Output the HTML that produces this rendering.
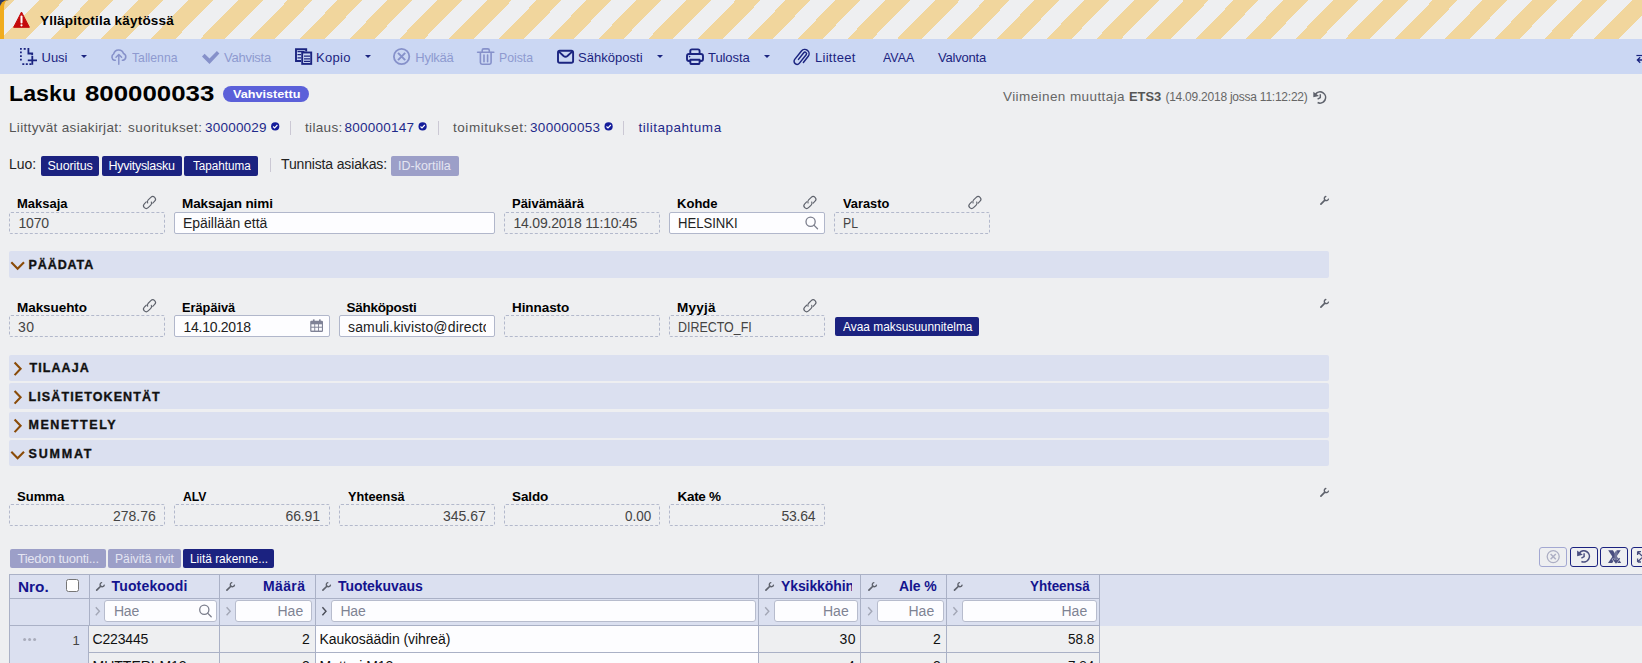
<!DOCTYPE html>
<html lang="fi">
<head>
<meta charset="utf-8">
<title>Lasku 800000033</title>
<style>
*{box-sizing:border-box;margin:0;padding:0}
html,body{width:1642px;height:663px;overflow:hidden;background:#eeeff1;font-family:"Liberation Sans","DejaVu Sans",sans-serif;color:#000}
body{position:relative}
.a{position:absolute;white-space:nowrap;line-height:1}
svg{position:absolute;overflow:visible}
#banner{left:0;top:0;width:1642px;height:39px;border-top-left-radius:9px;background:repeating-linear-gradient(134.29deg,#f1d69d 0,#f1d69d 10.09px,#eeeff1 10.09px,#eeeff1 27.91px,#f1d69d 27.91px,#f1d69d 35.635px)}
#corner{left:0;top:0;width:10px;height:10px;background:#2b3a67}
#bannerL{left:0;top:0;width:8px;height:39px;border-left:4px solid #f0ac1e;border-top-left-radius:9px}
#tb{left:0;top:39px;width:1642px;height:35px;background:#cbd7f3}
.car{top:55px;width:0;height:0;border-left:3px solid transparent;border-right:3px solid transparent;border-top:3px solid #1b2480}
#badge{left:223px;top:86.4px;width:86px;height:15.6px;border-radius:8px;background:#5b60d9}
.sep{width:1.4px;background:#cbc8d4}
.btn{border-radius:2px;background:#1b2280}
.btn.dis{background:#9c9fc8}
.inp{height:22px;border:1px dashed #b3b9cc;border-radius:2px}
.inp.w{border:1px solid #b1b7cb;background:#fdfdff}
.bar{left:9px;width:1320px;height:26px;background:#dbe0f0;border-radius:2px}
.hl{background:#aab1c6}
.fi{height:22px;background:#fdfdff;border:1px solid #b7bccd;border-radius:3px}
.ib{height:20px;border:1.5px solid #1b2280;border-radius:3px}
</style>
</head>
<body>
<div class="a" id="corner"></div>
<div class="a" id="banner"></div>
<div class="a" id="bannerL"></div>
<div class="a" id="tb"></div>
<div class="a car" style="left:81px"></div>
<div class="a car" style="left:365px"></div>
<div class="a car" style="left:657px"></div>
<div class="a car" style="left:764px"></div>
<div class="a" id="badge"></div>
<div class="a sep" style="left:289.8px;top:120.5px;height:14px"></div>
<div class="a sep" style="left:437.8px;top:120.5px;height:14px"></div>
<div class="a sep" style="left:622.8px;top:120.5px;height:14px"></div>
<div class="a sep" style="left:269.8px;top:157.5px;height:14px"></div>
<div class="a btn" style="left:41px;top:156px;width:58px;height:20px"></div>
<div class="a btn" style="left:102px;top:156px;width:80px;height:20px"></div>
<div class="a btn" style="left:184px;top:156px;width:74px;height:20px"></div>
<div class="a btn dis" style="left:391px;top:156px;width:68px;height:20px"></div>
<!-- row1 inputs -->
<div class="a inp" style="left:9px;top:212px;width:156px"></div>
<div class="a inp w" style="left:174px;top:212px;width:321px"></div>
<div class="a inp" style="left:504px;top:212px;width:156px"></div>
<div class="a inp w" style="left:669px;top:212px;width:156px"></div>
<div class="a inp" style="left:834px;top:212px;width:156px"></div>
<div class="a bar" style="top:251px;height:27px"></div>
<!-- row2 inputs -->
<div class="a inp" style="left:9px;top:315px;width:156px"></div>
<div class="a inp w" style="left:174px;top:315px;width:156px"></div>
<div class="a inp w" style="left:339px;top:315px;width:156px"></div>
<div class="a inp" style="left:504px;top:315px;width:156px"></div>
<div class="a inp" style="left:669px;top:315px;width:156px"></div>
<div class="a btn" style="left:835px;top:317px;width:144px;height:19px"></div>
<div class="a bar" style="top:355px"></div>
<div class="a bar" style="top:383px"></div>
<div class="a bar" style="top:412px"></div>
<div class="a bar" style="top:440px"></div>
<!-- row3 inputs -->
<div class="a inp" style="left:9px;top:504px;width:156px"></div>
<div class="a inp" style="left:174px;top:504px;width:156px"></div>
<div class="a inp" style="left:339px;top:504px;width:156px"></div>
<div class="a inp" style="left:504px;top:504px;width:156px"></div>
<div class="a inp" style="left:669px;top:504px;width:156px"></div>
<!-- buttons row -->
<div class="a btn dis" style="left:10px;top:549px;width:96px;height:19px"></div>
<div class="a btn dis" style="left:108px;top:549px;width:73px;height:19px"></div>
<div class="a btn" style="left:183px;top:549px;width:91.4px;height:19px"></div>
<!-- right buttons -->
<div class="a ib" style="left:1539px;top:547px;width:28px;border:1px solid #a3a8d2"></div>
<div class="a ib" style="left:1570px;top:547px;width:28px"></div>
<div class="a ib" style="left:1600px;top:547px;width:28px"></div>
<div class="a ib" style="left:1631px;top:547px;width:28px"></div>
<!-- table -->
<div class="a" style="left:9px;top:574px;width:1633px;height:52px;background:#dbe0f0"></div>
<div class="a" style="left:9px;top:626px;width:79px;height:40px;background:#dbe0f0"></div>
<div class="a" style="left:316px;top:626px;width:443px;height:40px;background:#fdfdff"></div>
<div class="a hl" style="left:9px;top:574px;width:1633px;height:1px"></div>
<div class="a hl" style="left:9px;top:598px;width:1091px;height:1px"></div>
<div class="a hl" style="left:9px;top:625px;width:1091px;height:1px"></div>
<div class="a hl" style="left:89px;top:652px;width:1011px;height:1px"></div>
<div class="a hl" style="left:9px;top:574px;width:1px;height:90px"></div>
<div class="a hl" style="left:89px;top:574px;width:1px;height:52px"></div>
<div class="a hl" style="left:88px;top:626px;width:1px;height:40px"></div>
<div class="a hl" style="left:219px;top:574px;width:1px;height:90px"></div>
<div class="a hl" style="left:315px;top:574px;width:1px;height:90px"></div>
<div class="a hl" style="left:758px;top:574px;width:1px;height:90px"></div>
<div class="a hl" style="left:860px;top:574px;width:1px;height:90px"></div>
<div class="a hl" style="left:946px;top:574px;width:1px;height:90px"></div>
<div class="a hl" style="left:1099px;top:574px;width:1px;height:90px"></div>
<div class="a fi" style="left:104px;top:600px;width:113px"></div>
<div class="a fi" style="left:235px;top:600px;width:77px"></div>
<div class="a fi" style="left:331px;top:600px;width:425px"></div>
<div class="a fi" style="left:774px;top:600px;width:84px"></div>
<div class="a fi" style="left:877px;top:600px;width:67px"></div>
<div class="a fi" style="left:962px;top:600px;width:135px"></div>
<div class="a" style="left:66px;top:579px;width:13px;height:13px;background:#fff;border:1px solid #767676;border-radius:2.5px"></div>
<svg width="1642" height="663" viewBox="0 0 1642 663" style="left:0;top:0" fill="none">
<path d="M21.5 12 L29.4 27.3 L13.6 27.3 Z" fill="#c40a0a" stroke="#c40a0a" stroke-width="1" stroke-linejoin="round"/>
<path d="M21.5 16.6 V22.4" stroke="#fff" stroke-width="2" stroke-linecap="round"/><circle cx="21.5" cy="25.3" r="1.1" fill="#fff"/>
<g stroke="#1b2480" stroke-width="1.8">
<path d="M20.9 48 V62.5" stroke-dasharray="1.7 1.9"/>
<path d="M23.7 48.9 H25.7" /><path d="M22.3 64.2 H24.3 M25.8 64.2 H27.8 M29.4 64.2 H31.4"/>
<path d="M28.4 48 V53.5 H32.2 V55.2"/><path d="M32.3 56 V64.8 M27.8 60.3 H37"/>
</g>
<g stroke="#8691ca" stroke-width="1.6" stroke-linecap="round" stroke-linejoin="round">
<path d="M115.3 60.2 H114.2 A3.5 3.5 0 0 1 113.7 53.9 A5.1 5.1 0 0 1 123.5 53.4 A3.6 3.6 0 0 1 123.2 60.2 H122.4"/>
<path d="M118.8 64.3 V54.8 M116 57.3 L118.8 54.5 L121.6 57.3" stroke-width="1.4"/>
</g>
<path d="M202 56.5 L204.6 53.8 L209.5 58.6 L216.9 51 L219.4 53.4 L209.5 64 Z" fill="#8691ca"/>
<g stroke="#1b2480" stroke-width="1.9">
<path d="M306.2 51.5 V49.2 H296 V61 H301"/>
<rect x="302.2" y="52.5" width="9" height="11.4"/>
</g>
<g stroke="#1b2480" stroke-width="1.3"><path d="M304 56.2 H310 M304 58.8 H310 M304 61.4 H310"/><path d="M297.5 51.6 H304.5 M297.5 54.6 H301 M297.5 57.8 H301"/></g>
<g stroke="#8691ca" stroke-width="1.8"><circle cx="401.6" cy="56.5" r="7.7"/><path d="M398 52.9 L405.2 60.1 M405.2 52.9 L398 60.1" stroke-width="2"/></g>
<g stroke="#8691ca" stroke-width="1.6" stroke-linecap="round" stroke-linejoin="round">
<path d="M477.6 52.3 H493.8"/><path d="M482.2 52 V50.4 Q482.2 48.9 483.7 48.9 H487.8 Q489.3 48.9 489.3 50.4 V52"/>
<path d="M480.4 52.5 V62.6 Q480.4 64.2 482 64.2 H489.5 Q491.1 64.2 491.1 62.6 V52.5"/>
<path d="M484 55 V61.8 M487.6 55 V61.8"/>
</g>
<g stroke="#1b2480" stroke-width="1.9" stroke-linejoin="round"><rect x="558" y="50.7" width="15.1" height="12.1" rx="1.8"/><path d="M558.6 51.4 L563.6 56 Q565.5 57.5 567.4 56 L572.5 51.4"/></g>
<g stroke="#1b2480" stroke-width="1.9" stroke-linejoin="round">
<path d="M690.3 53.6 V51 Q690.3 49.4 691.9 49.4 H698 Q699.6 49.4 699.6 51 V53.6"/>
<path d="M690.2 61 H689 Q687 61 687 59 V56 Q687 54 689 54 H701 Q703 54 703 56 V59 Q703 61 701 61 H699.8"/>
<path d="M690.3 59.8 H699.6 V62.4 Q699.6 64 698 64 H691.9 Q690.3 64 690.3 62.4 Z"/>
</g>
<circle cx="689.6" cy="56.6" r="0.8" fill="#1b2480"/>
<g transform="matrix(0.6225 -0.7826 0.7826 0.6225 788 44)" stroke="#1b2480" stroke-width="1.5" stroke-linecap="round">
<path d="M-5.5 17.76 H2.97 A1.55 1.55 0 0 1 2.97 20.87 H-7.83 A3.02 3.02 0 0 1 -7.83 14.83 H2.96 A4.35 4.35 0 0 1 2.96 23.52 H-4.87"/>
</g>
<path d="M1636.4 55.5 H1642" stroke="#1b2480" stroke-width="1.2"/><path d="M1640.2 57.3 L1637.4 60 L1640.2 62.7 M1637.6 60 H1642" stroke="#1b2480" stroke-width="1.3"/>
<path d="M1315.59 94.05 A5.6 5.6 0 1 1 1317.63 102.58" stroke="#5e626c" stroke-width="1.6"/><path d="M1313.30 91.70 V97.30 L1319.00 95.90 Z" fill="#5e626c"/><path d="M1320.30 94.30 V97.70 L1317.60 99.20" stroke="#5e626c" stroke-width="1.44"/>
<circle cx="275.2" cy="126.4" r="4.1" fill="#141c9a"/><path d="M273.09999999999997 126.5 L274.59999999999997 128 L277.4 125" stroke="#fff" stroke-width="1.1"/>
<circle cx="422.6" cy="126.4" r="4.1" fill="#141c9a"/><path d="M420.5 126.5 L422.0 128 L424.8 125" stroke="#fff" stroke-width="1.1"/>
<circle cx="608.6" cy="126.4" r="4.1" fill="#141c9a"/><path d="M606.5 126.5 L608.0 128 L610.8000000000001 125" stroke="#fff" stroke-width="1.1"/>
<g transform="translate(149.5 202.5) rotate(-45)" stroke="#5e626c" stroke-width="1.15" stroke-linecap="round"><path d="M-1.9 -2.7 H-4.6 A2.7 2.7 0 0 0 -4.6 2.7 H-0.9 A2.7 2.7 0 0 0 1.6 1"/><path d="M1.9 2.7 H4.6 A2.7 2.7 0 0 0 4.6 -2.7 H0.9 A2.7 2.7 0 0 0 -1.6 -1"/></g>
<g transform="translate(809.9 202.5) rotate(-45)" stroke="#5e626c" stroke-width="1.15" stroke-linecap="round"><path d="M-1.9 -2.7 H-4.6 A2.7 2.7 0 0 0 -4.6 2.7 H-0.9 A2.7 2.7 0 0 0 1.6 1"/><path d="M1.9 2.7 H4.6 A2.7 2.7 0 0 0 4.6 -2.7 H0.9 A2.7 2.7 0 0 0 -1.6 -1"/></g>
<g transform="translate(974.9 202.5) rotate(-45)" stroke="#5e626c" stroke-width="1.15" stroke-linecap="round"><path d="M-1.9 -2.7 H-4.6 A2.7 2.7 0 0 0 -4.6 2.7 H-0.9 A2.7 2.7 0 0 0 1.6 1"/><path d="M1.9 2.7 H4.6 A2.7 2.7 0 0 0 4.6 -2.7 H0.9 A2.7 2.7 0 0 0 -1.6 -1"/></g>
<g transform="translate(149.5 305.79999999999995) rotate(-45)" stroke="#5e626c" stroke-width="1.15" stroke-linecap="round"><path d="M-1.9 -2.7 H-4.6 A2.7 2.7 0 0 0 -4.6 2.7 H-0.9 A2.7 2.7 0 0 0 1.6 1"/><path d="M1.9 2.7 H4.6 A2.7 2.7 0 0 0 4.6 -2.7 H0.9 A2.7 2.7 0 0 0 -1.6 -1"/></g>
<g transform="translate(809.9 305.79999999999995) rotate(-45)" stroke="#5e626c" stroke-width="1.15" stroke-linecap="round"><path d="M-1.9 -2.7 H-4.6 A2.7 2.7 0 0 0 -4.6 2.7 H-0.9 A2.7 2.7 0 0 0 1.6 1"/><path d="M1.9 2.7 H4.6 A2.7 2.7 0 0 0 4.6 -2.7 H0.9 A2.7 2.7 0 0 0 -1.6 -1"/></g>
<circle cx="810.6" cy="221.8" r="4.6" stroke="#7b7e8c" stroke-width="1.3"/><path d="M813.912 225.11200000000002 L817.5120000000001 228.71200000000002" stroke="#7b7e8c" stroke-width="1.3" stroke-linecap="round"/>
<circle cx="204.3" cy="609.8" r="4.6" stroke="#7b7e8c" stroke-width="1.3"/><path d="M207.61200000000002 613.112 L211.21200000000002 616.712" stroke="#7b7e8c" stroke-width="1.3" stroke-linecap="round"/>
<g fill="#7f8296"><rect x="310.2" y="320.8" width="12.8" height="11.2" rx="1.2"/><rect x="312.9" y="319.4" width="1.7" height="2.4"/><rect x="319" y="319.4" width="1.7" height="2.4"/></g>
<g fill="#fbfbfe"><rect x="311.4" y="324.3" width="2.9" height="2.4"/><rect x="315.2" y="324.3" width="2.9" height="2.4"/><rect x="319" y="324.3" width="2.9" height="2.4"/><rect x="311.4" y="327.7" width="2.9" height="2.9"/><rect x="315.2" y="327.7" width="2.9" height="2.9"/><rect x="319" y="327.7" width="2.9" height="2.9"/></g>
<path d="M1320.90 204.10 L1324.60 200.40" stroke="#5e626c" stroke-width="1.7" stroke-linecap="round"/><path d="M1325.80 196.50 A2.1 2.1 0 1 0 1328.40 199.10" stroke="#5e626c" stroke-width="1.4" stroke-linecap="round"/>
<path d="M1320.90 307.10 L1324.60 303.40" stroke="#5e626c" stroke-width="1.7" stroke-linecap="round"/><path d="M1325.80 299.50 A2.1 2.1 0 1 0 1328.40 302.10" stroke="#5e626c" stroke-width="1.4" stroke-linecap="round"/>
<path d="M1320.90 496.10 L1324.60 492.40" stroke="#5e626c" stroke-width="1.7" stroke-linecap="round"/><path d="M1325.80 488.50 A2.1 2.1 0 1 0 1328.40 491.10" stroke="#5e626c" stroke-width="1.4" stroke-linecap="round"/>
<path d="M96.70 590.20 L100.40 586.50" stroke="#5e626c" stroke-width="1.7" stroke-linecap="round"/><path d="M101.60 582.60 A2.1 2.1 0 1 0 104.20 585.20" stroke="#5e626c" stroke-width="1.4" stroke-linecap="round"/>
<path d="M226.90 590.20 L230.60 586.50" stroke="#5e626c" stroke-width="1.7" stroke-linecap="round"/><path d="M231.80 582.60 A2.1 2.1 0 1 0 234.40 585.20" stroke="#5e626c" stroke-width="1.4" stroke-linecap="round"/>
<path d="M322.90 590.20 L326.60 586.50" stroke="#5e626c" stroke-width="1.7" stroke-linecap="round"/><path d="M327.80 582.60 A2.1 2.1 0 1 0 330.40 585.20" stroke="#5e626c" stroke-width="1.4" stroke-linecap="round"/>
<path d="M765.90 590.20 L769.60 586.50" stroke="#5e626c" stroke-width="1.7" stroke-linecap="round"/><path d="M770.80 582.60 A2.1 2.1 0 1 0 773.40 585.20" stroke="#5e626c" stroke-width="1.4" stroke-linecap="round"/>
<path d="M868.90 590.20 L872.60 586.50" stroke="#5e626c" stroke-width="1.7" stroke-linecap="round"/><path d="M873.80 582.60 A2.1 2.1 0 1 0 876.40 585.20" stroke="#5e626c" stroke-width="1.4" stroke-linecap="round"/>
<path d="M954.50 590.20 L958.20 586.50" stroke="#5e626c" stroke-width="1.7" stroke-linecap="round"/><path d="M959.40 582.60 A2.1 2.1 0 1 0 962.00 585.20" stroke="#5e626c" stroke-width="1.4" stroke-linecap="round"/>
<path d="M11.3 262.3 L17.6 268.8 L24 262.3" stroke="#8a4b08" stroke-width="2.1"/>
<path d="M11.3 451.8 L17.6 458.3 L24 451.8" stroke="#8a4b08" stroke-width="2.1"/>
<path d="M14.6 362.5 L20.6 368.8 L14.6 375.1" stroke="#8a4b08" stroke-width="2.1"/>
<path d="M14.6 391.0 L20.6 397.3 L14.6 403.6" stroke="#8a4b08" stroke-width="2.1"/>
<path d="M14.6 419.5 L20.6 425.8 L14.6 432.1" stroke="#8a4b08" stroke-width="2.1"/>
<path d="M95.8 607.2 L99.39999999999999 611.2 L95.8 615.2" stroke="#a3a7b6" stroke-width="1.4"/>
<path d="M226.6 607.2 L230.2 611.2 L226.6 615.2" stroke="#a3a7b6" stroke-width="1.4"/>
<path d="M322.4 607.2 L326.0 611.2 L322.4 615.2" stroke="#4a4d58" stroke-width="1.4"/>
<path d="M765.2 607.2 L768.8000000000001 611.2 L765.2 615.2" stroke="#a3a7b6" stroke-width="1.4"/>
<path d="M868.2 607.2 L871.8000000000001 611.2 L868.2 615.2" stroke="#a3a7b6" stroke-width="1.4"/>
<path d="M953.4 607.2 L957.0 611.2 L953.4 615.2" stroke="#a3a7b6" stroke-width="1.4"/>
<circle cx="24.6" cy="639.6" r="1.5" fill="#a9acbb"/>
<circle cx="29.6" cy="639.6" r="1.5" fill="#a9acbb"/>
<circle cx="34.6" cy="639.6" r="1.5" fill="#a9acbb"/>
<g stroke="#adafc4" stroke-width="1.3"><circle cx="1553.2" cy="556.6" r="6"/><path d="M1550.6 554 L1555.8 559.2 M1555.8 554 L1550.6 559.2" stroke-width="1.5"/></g>
<path d="M1579.39 552.95 A5.6 5.6 0 1 1 1581.43 561.48" stroke="#4a4f80" stroke-width="1.6"/><path d="M1577.10 550.60 V556.20 L1582.80 554.80 Z" fill="#4a4f80"/><path d="M1584.10 553.20 V556.60 L1581.40 558.10" stroke="#4a4f80" stroke-width="1.44"/>
<g fill="#4a4f80"><path d="M1608.2 550.2 H1612.9 L1621.2 562.9 H1616.5 Z"/><path d="M1616.8 550.2 H1620.7 L1612.2 562.9 H1608 Z"/></g>
<path d="M1616 551.6 V562.2 M1612.6 558.4 L1616 562.4 L1619.8 558.2" stroke="#eeeff1" stroke-width="2.3"/>
<path d="M1616 551.4 V562.4 M1612.8 558.6 L1616 562.5 L1619.6 558.3" stroke="#4a4f80" stroke-width="1.5"/>
<path d="M1637.6 551.6 L1642 556 M1637.6 551.6 H1641 M1637.6 551.6 V555 M1642 557.6 L1637.6 562 M1637.6 562 V558.6 M1637.6 562 H1641" stroke="#4a4f80" stroke-width="1.3"/>
</svg>

<div class="a" style="left:40.00px;top:14px;font-size:13.5px;color:#000;font-weight:bold;letter-spacing:0.200px">Ylläpitotila käytössä</div>
<div class="a" style="left:41.50px;top:51px;font-size:13px;color:#1b2480">Uusi</div>
<div class="a" style="left:132.25px;top:51px;font-size:13px;color:#8e9ad0;transform:scaleX(0.9388);transform-origin:0 0">Tallenna</div>
<div class="a" style="left:224.00px;top:51px;font-size:13px;color:#8e9ad0;letter-spacing:-0.250px">Vahvista</div>
<div class="a" style="left:316.00px;top:51px;font-size:13px;color:#1b2480;letter-spacing:0.312px">Kopio</div>
<div class="a" style="left:415.25px;top:51px;font-size:13px;color:#8e9ad0;letter-spacing:-0.250px">Hylkää</div>
<div class="a" style="left:499.31px;top:51px;font-size:13px;color:#8e9ad0;transform:scaleX(0.9429);transform-origin:0 0">Poista</div>
<div class="a" style="left:578.00px;top:51px;font-size:13px;color:#1b2480;letter-spacing:0.028px">Sähköposti</div>
<div class="a" style="left:708.00px;top:51px;font-size:13px;color:#1b2480;letter-spacing:-0.083px">Tulosta</div>
<div class="a" style="left:815.00px;top:51px;font-size:13px;color:#1b2480;letter-spacing:0.286px">Liitteet</div>
<div class="a" style="left:882.50px;top:51px;font-size:13px;color:#1b2480;transform:scaleX(0.9545);transform-origin:0 0">AVAA</div>
<div class="a" style="left:938.00px;top:51px;font-size:13px;color:#1b2480;letter-spacing:-0.214px">Valvonta</div>
<div class="a" style="left:8.97px;top:83px;font-size:22.5px;color:#000;font-weight:bold;transform:scaleX(1.0317);transform-origin:0 0">Lasku</div>
<div class="a" style="left:85.15px;top:83px;font-size:22.5px;color:#000;font-weight:bold;transform:scaleX(1.1486);transform-origin:0 0">800000033</div>
<div class="a" style="left:233.00px;top:89px;font-size:11.5px;color:#fff;font-weight:bold;transform:scaleX(1.0984);transform-origin:0 0">Vahvistettu</div>
<div class="a" style="left:1003.00px;top:90px;font-size:13.5px;color:#666;letter-spacing:0.412px">Viimeinen muuttaja</div>
<div class="a" style="left:1129.04px;top:90px;font-size:13.5px;color:#555;font-weight:bold;transform:scaleX(0.9562);transform-origin:0 0">ETS3</div>
<div class="a" style="left:1165.40px;top:91px;font-size:12px;color:#666;letter-spacing:-0.238px">(14.09.2018 jossa 11:12:22)</div>
<div class="a" style="left:9.00px;top:121px;font-size:13.5px;color:#555;letter-spacing:0.325px">Liittyvät asiakirjat:</div>
<div class="a" style="left:128.00px;top:121px;font-size:13.5px;color:#555;letter-spacing:0.455px">suoritukset:</div>
<div class="a" style="left:205.00px;top:121px;font-size:13.5px;color:#1f2a8a;letter-spacing:0.214px">30000029</div>
<div class="a" style="left:305.00px;top:121px;font-size:13.5px;color:#555;letter-spacing:0.333px">tilaus:</div>
<div class="a" style="left:344.50px;top:121px;font-size:13.5px;color:#1f2a8a;letter-spacing:0.250px">800000147</div>
<div class="a" style="left:453.00px;top:121px;font-size:13.5px;color:#555;letter-spacing:0.545px">toimitukset:</div>
<div class="a" style="left:530.00px;top:121px;font-size:13.5px;color:#1f2a8a;letter-spacing:0.312px">300000053</div>
<div class="a" style="left:638.40px;top:121px;font-size:13.5px;color:#1f2a8a;letter-spacing:0.517px">tilitapahtuma</div>
<div class="a" style="left:9.00px;top:157px;font-size:14px;color:#222">Luo:</div>
<div class="a" style="left:47.50px;top:160px;font-size:12.5px;color:#fff;letter-spacing:-0.071px">Suoritus</div>
<div class="a" style="left:108.50px;top:160px;font-size:12.5px;color:#fff;letter-spacing:-0.273px">Hyvityslasku</div>
<div class="a" style="left:192.50px;top:160px;font-size:12.5px;color:#fff;transform:scaleX(0.9355);transform-origin:0 0">Tapahtuma</div>
<div class="a" style="left:281.00px;top:157px;font-size:14px;color:#222;letter-spacing:-0.150px">Tunnista asiakas:</div>
<div class="a" style="left:398.00px;top:160px;font-size:12.5px;color:#e4e5f2">ID-kortilla</div>
<div class="a" style="left:17.04px;top:197px;font-size:13.5px;color:#000;font-weight:bold;transform:scaleX(0.9615);transform-origin:0 0">Maksaja</div>
<div class="a" style="left:182.00px;top:197px;font-size:13.5px;color:#000;font-weight:bold;letter-spacing:-0.117px">Maksajan nimi</div>
<div class="a" style="left:512.04px;top:197px;font-size:13.5px;color:#000;font-weight:bold;transform:scaleX(0.9595);transform-origin:0 0">Päivämäärä</div>
<div class="a" style="left:677.03px;top:197px;font-size:13.5px;color:#000;font-weight:bold;transform:scaleX(0.9659);transform-origin:0 0">Kohde</div>
<div class="a" style="left:843.00px;top:197px;font-size:13.5px;color:#000;font-weight:bold;transform:scaleX(0.9479);transform-origin:0 0">Varasto</div>
<div class="a" style="left:17.00px;top:301px;font-size:13.5px;color:#000;font-weight:bold;letter-spacing:-0.062px">Maksuehto</div>
<div class="a" style="left:182.05px;top:301px;font-size:13.5px;color:#000;font-weight:bold;transform:scaleX(0.9455);transform-origin:0 0">Eräpäivä</div>
<div class="a" style="left:346.50px;top:301px;font-size:13.5px;color:#000;font-weight:bold;letter-spacing:-0.278px">Sähköposti</div>
<div class="a" style="left:512.00px;top:301px;font-size:13.5px;color:#000;font-weight:bold;letter-spacing:-0.071px">Hinnasto</div>
<div class="a" style="left:677.00px;top:301px;font-size:13.5px;color:#000;font-weight:bold;letter-spacing:0.250px">Myyjä</div>
<div class="a" style="left:16.53px;top:490px;font-size:13.5px;color:#000;font-weight:bold;transform:scaleX(0.9688);transform-origin:0 0">Summa</div>
<div class="a" style="left:183.00px;top:490px;font-size:13.5px;color:#000;font-weight:bold;transform:scaleX(0.9038);transform-origin:0 0">ALV</div>
<div class="a" style="left:347.50px;top:490px;font-size:13.5px;color:#000;font-weight:bold;transform:scaleX(0.9417);transform-origin:0 0">Yhteensä</div>
<div class="a" style="left:512.00px;top:490px;font-size:13.5px;color:#000;font-weight:bold;letter-spacing:-0.125px">Saldo</div>
<div class="a" style="left:677.50px;top:490px;font-size:13.5px;color:#000;font-weight:bold;letter-spacing:-0.300px">Kate %</div>
<div class="a" style="left:18.50px;top:216px;font-size:14px;color:#444;letter-spacing:-0.167px">1070</div>
<div class="a" style="left:183.00px;top:216px;font-size:14px;color:#222;letter-spacing:-0.038px">Epäillään että</div>
<div class="a" style="left:513.40px;top:216px;font-size:14px;color:#444;letter-spacing:-0.189px">14.09.2018 11:10:45</div>
<div class="a" style="left:678.06px;top:216px;font-size:14px;color:#222;transform:scaleX(0.9355);transform-origin:0 0">HELSINKI</div>
<div class="a" style="left:843.12px;top:216px;font-size:14px;color:#444;transform:scaleX(0.8750);transform-origin:0 0">PL</div>
<div class="a" style="left:18.00px;top:320px;font-size:14px;color:#444;letter-spacing:0.500px">30</div>
<div class="a" style="left:183.50px;top:320px;font-size:14px;color:#222;letter-spacing:-0.278px">14.10.2018</div>
<div class="a" style="left:348.00px;top:320px;font-size:14px;color:#222;letter-spacing:0.150px;width:137.50px;overflow:hidden">samuli.kivisto@directo.ee</div>
<div class="a" style="left:678.11px;top:320px;font-size:14px;color:#444;transform:scaleX(0.8889);transform-origin:0 0">DIRECTO_FI</div>
<div class="a" style="left:113.00px;top:509px;font-size:14px;color:#444">278.76</div>
<div class="a" style="left:285.50px;top:509px;font-size:14px;color:#444;letter-spacing:-0.125px">66.91</div>
<div class="a" style="left:443.00px;top:509px;font-size:14px;color:#444">345.67</div>
<div class="a" style="left:625.00px;top:509px;font-size:14px;color:#444;transform:scaleX(0.9630);transform-origin:0 0">0.00</div>
<div class="a" style="left:781.50px;top:509px;font-size:14px;color:#444;letter-spacing:-0.250px">53.64</div>
<div class="a" style="left:842.50px;top:321px;font-size:12.5px;color:#fff;transform:scaleX(0.9522);transform-origin:0 0">Avaa maksusuunnitelma</div>
<div class="a" style="left:28.50px;top:259px;font-size:12.5px;color:#111;font-weight:bold;letter-spacing:0.917px;-webkit-text-stroke:0.35px #111">PÄÄDATA</div>
<div class="a" style="left:29.50px;top:362px;font-size:12.5px;color:#111;font-weight:bold;letter-spacing:1.083px;-webkit-text-stroke:0.35px #111">TILAAJA</div>
<div class="a" style="left:28.50px;top:391px;font-size:12.5px;color:#111;font-weight:bold;letter-spacing:1.107px;-webkit-text-stroke:0.35px #111">LISÄTIETOKENTÄT</div>
<div class="a" style="left:28.50px;top:419px;font-size:12.5px;color:#111;font-weight:bold;letter-spacing:1.562px;-webkit-text-stroke:0.35px #111">MENETTELY</div>
<div class="a" style="left:28.50px;top:448px;font-size:12.5px;color:#111;font-weight:bold;letter-spacing:1.800px;-webkit-text-stroke:0.35px #111">SUMMAT</div>
<div class="a" style="left:17.50px;top:552px;font-size:13px;color:#e4e5f2;letter-spacing:-0.267px">Tiedon tuonti...</div>
<div class="a" style="left:115.06px;top:552px;font-size:13px;color:#e4e5f2;transform:scaleX(0.9355);transform-origin:0 0">Päivitä rivit</div>
<div class="a" style="left:190.08px;top:552px;font-size:13px;color:#fff;transform:scaleX(0.9157);transform-origin:0 0">Liitä rakenne...</div>
<div class="a" style="left:18.40px;top:580px;font-size:14px;color:#14148e;font-weight:bold;transform:scaleX(1.0962);transform-origin:0 0">Nro.</div>
<div class="a" style="left:111.50px;top:579px;font-size:14px;color:#14148e;font-weight:bold;letter-spacing:0.167px">Tuotekoodi</div>
<div class="a" style="left:263.00px;top:579px;font-size:14px;color:#14148e;font-weight:bold;letter-spacing:0.375px">Määrä</div>
<div class="a" style="left:338.00px;top:579px;font-size:14px;color:#14148e;font-weight:bold;letter-spacing:-0.050px">Tuotekuvaus</div>
<div class="a" style="left:899.00px;top:579px;font-size:14px;color:#14148e;font-weight:bold;letter-spacing:-0.125px">Ale %</div>
<div class="a" style="left:1030.00px;top:579px;font-size:14px;color:#14148e;font-weight:bold;transform:scaleX(0.9597);transform-origin:0 0">Yhteensä</div>
<div class="a" style="left:781.00px;top:579px;font-size:14px;color:#14148e;font-weight:bold;letter-spacing:-0.100px;width:70.50px;overflow:hidden">Yksikköhinta</div>
<div class="a" style="left:114.00px;top:604px;font-size:14px;color:#7f8393;letter-spacing:-0.250px">Hae</div>
<div class="a" style="left:277.50px;top:604px;font-size:14px;color:#7f8393">Hae</div>
<div class="a" style="left:340.50px;top:604px;font-size:14px;color:#7f8393;letter-spacing:-0.250px">Hae</div>
<div class="a" style="left:823.00px;top:604px;font-size:14px;color:#7f8393">Hae</div>
<div class="a" style="left:908.50px;top:604px;font-size:14px;color:#7f8393">Hae</div>
<div class="a" style="left:1061.50px;top:604px;font-size:14px;color:#7f8393">Hae</div>
<div class="a" style="left:72.50px;top:634px;font-size:13px;color:#444">1</div>
<div class="a" style="left:92.50px;top:632px;font-size:14px;color:#111;letter-spacing:-0.167px">C223445</div>
<div class="a" style="left:302.00px;top:632px;font-size:14px;color:#111">2</div>
<div class="a" style="left:319.50px;top:632px;font-size:14px;color:#111;letter-spacing:-0.079px">Kaukosäädin (vihreä)</div>
<div class="a" style="left:839.50px;top:632px;font-size:14px;color:#111;letter-spacing:0.500px">30</div>
<div class="a" style="left:933.00px;top:632px;font-size:14px;color:#111">2</div>
<div class="a" style="left:1068.04px;top:632px;font-size:14px;color:#111;transform:scaleX(0.9615);transform-origin:0 0">58.8</div>
<div class="a" style="left:72.00px;top:661px;font-size:13px;color:#444">2</div>
<div class="a" style="left:92.50px;top:659px;font-size:14px;color:#111">MUTTERI-M12</div>
<div class="a" style="left:302.00px;top:659px;font-size:14px;color:#111">3</div>
<div class="a" style="left:319.50px;top:659px;font-size:14px;color:#111">Mutteri M12</div>
<div class="a" style="left:847.00px;top:659px;font-size:14px;color:#111">4</div>
<div class="a" style="left:933.00px;top:659px;font-size:14px;color:#111">3</div>
<div class="a" style="left:1068.04px;top:659px;font-size:14px;color:#111;transform:scaleX(0.9615);transform-origin:0 0">7.84</div>
</body>
</html>
